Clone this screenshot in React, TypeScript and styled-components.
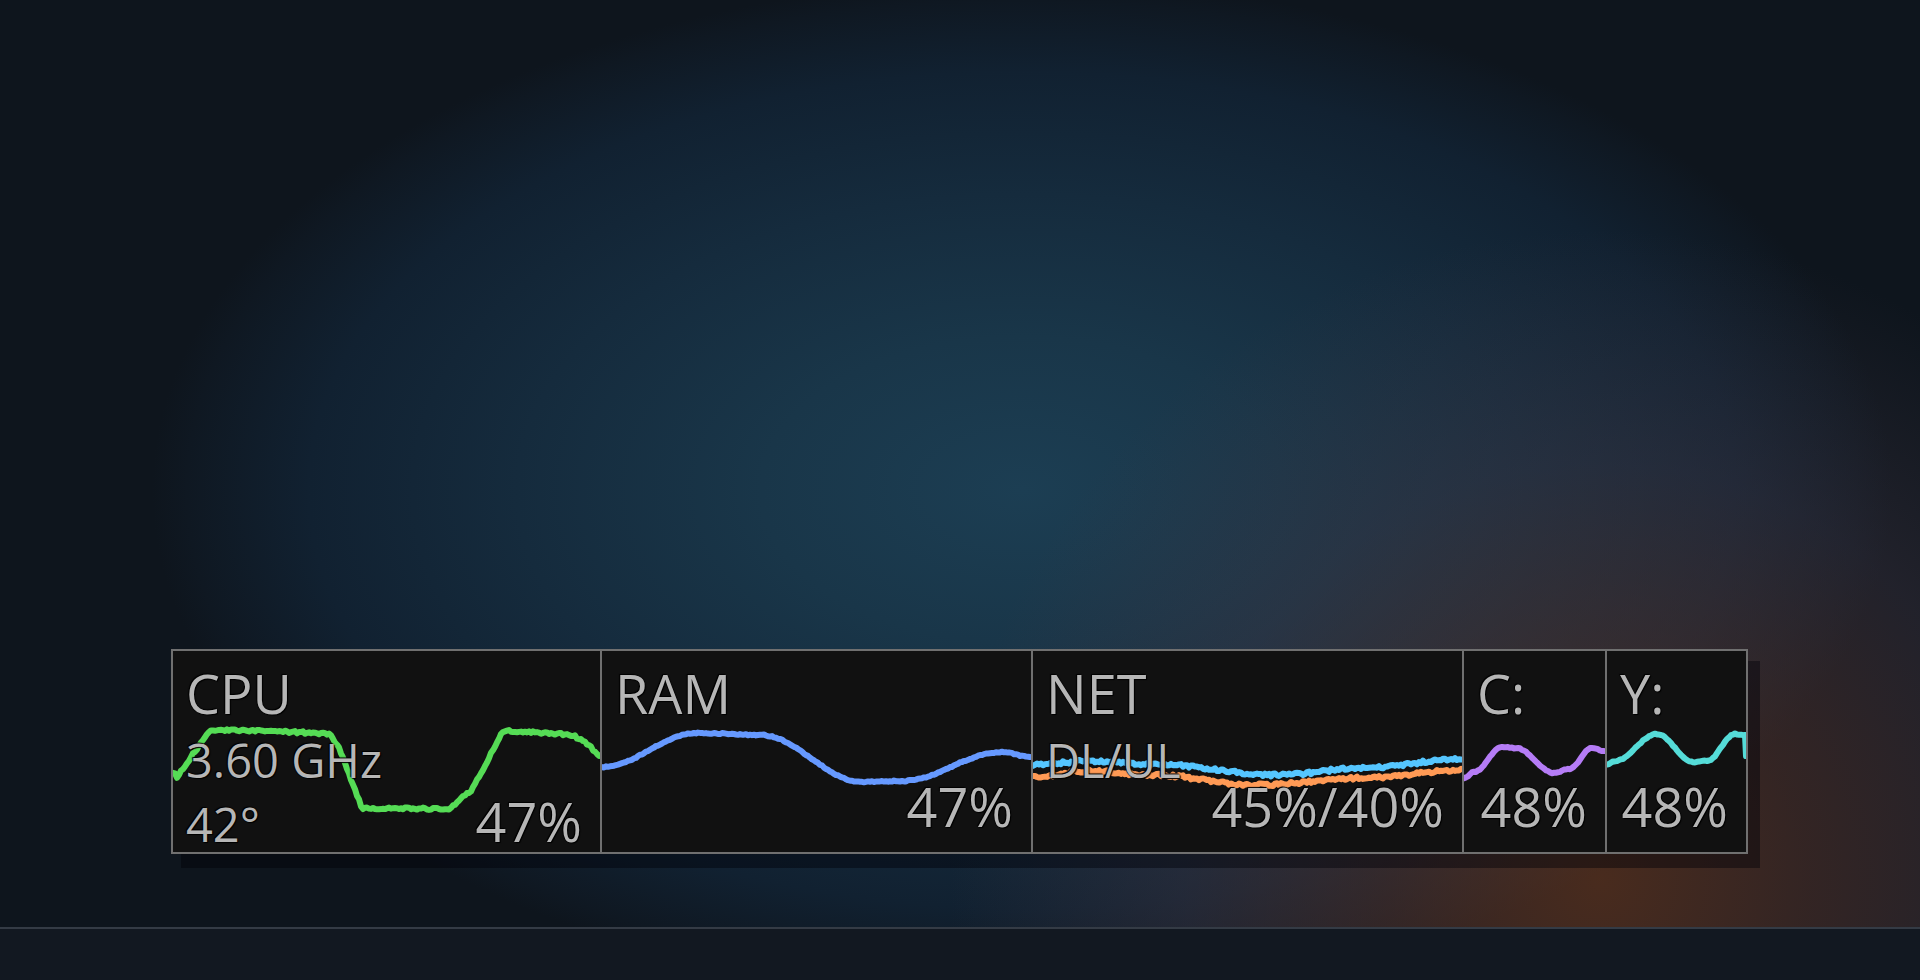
import React from 'react';
import styled, { createGlobalStyle } from 'styled-components';

const GlobalStyle = createGlobalStyle`
  html, body {
    margin: 0;
    padding: 0;
    height: 100%;
    overflow: hidden;
    background: #0e141b;
  }
  #root {
    height: 100%;
  }
`;

const Screen = styled.div`
  width: 1920px;
  height: 980px;
  display: flex;
  flex-direction: column;
  font-family: "Open Sans", "Noto Sans", sans-serif;
`;

const Desktop = styled.main`
  flex: 1;
  box-sizing: border-box;
  padding: 649px 0 0 171px;
  background:
    radial-gradient(circle 650px at 1600px 880px, rgba(112, 58, 30, 0.6) 0%, rgba(88, 52, 42, 0.5) 32%, rgba(68, 56, 68, 0.36) 64%, rgba(50, 60, 75, 0) 100%),
    radial-gradient(ellipse 870px 510px at 1022px 490px, #1c3e53 0%, #193649 30%, #152b3d 58%, #112131 82%, #0f1822 96%, #0e151d 100%),
    #0e141b;
`;

const Taskbar = styled.footer`
  height: 51px;
  border-top: 2px solid #343b45;
  background: #121821;
`;

const Monitor = styled.section`
  display: flex;
  width: max-content;
  border: 2px solid #707070;
  background: #111111;
  box-shadow: 11px 13px 0 1px rgba(0, 0, 6, 0.42);
`;

const Cell = styled.div<{ $w: number }>`
  position: relative;
  box-sizing: border-box;
  width: ${(p) => p.$w}px;
  height: 201px;
  padding: 15px 18px 19px 13px;
  display: grid;
  grid-template: 1fr / 1fr;
  & + & {
    border-left: 2px solid #707070;
  }
`;

// history plot, laid under the readings across the whole cell
const Graph = styled.svg`
  position: absolute;
  top: 0;
  left: 0;
  overflow: hidden;
`;

const Head = styled.div`
  grid-area: 1 / 1;
  position: relative;
  z-index: 1;
  display: flex;
  flex-direction: column;
  align-self: start;
  justify-self: start;
  gap: 16px;
`;

const Label = styled.span`
  font-size: 54px;
  line-height: 54px;
  color: #b6b6b6;
  white-space: nowrap;
  text-shadow: 0 0 1px #000, 1px 1px 1px #000, -1px -1px 1px #000;
`;

const SubLine = styled(Label)`
  font-size: 47px;
  line-height: 48px;
`;

const Value = styled(Label)`
  grid-area: 1 / 1;
  position: relative;
  z-index: 1;
  align-self: end;
  justify-self: end;
`;

type Pt = [number, number];

interface Series {
  color: string;
  keys: Pt[];
  jitter: number;
  seed: number;
  smooth?: boolean;
  tail?: Pt[];
}

interface Meter {
  label: string;
  lines?: string[];
  value: string;
  width: number;
  series: Series[];
}

const hash = (n: number) => {
  const s = Math.sin(n * 12.9898) * 43758.5453;
  return s - Math.floor(s);
};

// sample the key points every 2px, with a little noise on top
const trace = (s: Series, width: number) => {
  const pts: string[] = [];
  const { keys } = s;
  for (let x = 0; x <= width; x += 2) {
    let i = 0;
    while (i < keys.length - 2 && x > keys[i + 1][0]) i++;
    const [x0, y0] = keys[i];
    const [x1, y1] = keys[i + 1];
    let t = Math.min(1, Math.max(0, (x - x0) / (x1 - x0)));
    if (s.smooth) t = (1 - Math.cos(t * Math.PI)) / 2;
    const y = y0 + (y1 - y0) * t + (hash(x + s.seed * 131) - 0.5) * s.jitter;
    pts.push(`${x},${y.toFixed(1)}`);
  }
  (s.tail || []).forEach(([x, y]) => pts.push(`${x},${y}`));
  return pts.join(' ');
};

const meters: Meter[] = [
  {
    label: 'CPU',
    lines: ['3.60 GHz', '42°'],
    value: '47%',
    width: 427,
    series: [
      {
        color: '#55dc55',
        jitter: 2.4,
        seed: 1,
        keys: [
          [0, 121], [4, 126], [37, 79], [100, 80], [157, 83], [167, 99], [189, 157],
          [277, 158], [289, 146], [299, 139], [330, 80], [360, 81], [400, 84], [417, 95], [427, 106],
        ],
      },
    ],
  },
  {
    label: 'RAM',
    value: '47%',
    width: 431,
    series: [
      {
        color: '#6699ff',
        jitter: 1.2,
        seed: 2,
        smooth: true,
        keys: [[0, 116], [95, 82], [158, 84], [261, 131], [300, 130], [400, 101], [429, 106]],
      },
    ],
  },
  {
    label: 'NET',
    lines: ['DL/UL'],
    value: '45%/40%',
    width: 431,
    series: [
      {
        color: '#ff9a55',
        jitter: 3,
        seed: 3,
        smooth: true,
        keys: [[0, 126], [55, 120], [120, 124], [225, 134], [330, 127], [429, 119]],
      },
      {
        color: '#55c6ff',
        jitter: 3,
        seed: 4,
        smooth: true,
        keys: [[0, 114], [55, 110], [120, 113], [245, 124], [330, 117], [429, 108]],
      },
    ],
  },
  {
    label: 'C:',
    value: '48%',
    width: 143,
    series: [
      {
        color: '#b57cf6',
        jitter: 1,
        seed: 5,
        smooth: true,
        keys: [[0, 127], [10, 121], [38, 96], [52, 97], [90, 122], [105, 118], [128, 97], [141, 100]],
      },
    ],
  },
  {
    label: 'Y:',
    value: '48%',
    width: 141,
    series: [
      {
        color: '#55dcd8',
        jitter: 1,
        seed: 6,
        smooth: true,
        keys: [[0, 114], [8, 110], [50, 83], [86, 111], [100, 110], [128, 83], [139, 84]],
        tail: [[139, 105]],
      },
    ],
  },
];

const MeterCell: React.FC<{ meter: Meter; first: boolean }> = ({ meter, first }) => {
  const inner = meter.width - (first ? 0 : 2);
  return (
    <Cell $w={meter.width}>
      <Graph width={inner} height={201} viewBox={`0 0 ${inner} 201`}>
        {meter.series.map((s) => (
          <polyline
            key={s.seed}
            points={trace(s, inner)}
            fill="none"
            stroke={s.color}
            strokeWidth={6}
            strokeLinejoin="round"
            strokeLinecap="round"
          />
        ))}
      </Graph>
      <Head>
        <Label>{meter.label}</Label>
        {meter.lines?.map((line) => (
          <SubLine key={line}>{line}</SubLine>
        ))}
      </Head>
      <Value>{meter.value}</Value>
    </Cell>
  );
};

export default function App() {
  return (
    <>
      <GlobalStyle />
      <Screen>
        <Desktop>
          <Monitor>
            {meters.map((m, i) => (
              <MeterCell key={m.label} meter={m} first={i === 0} />
            ))}
          </Monitor>
        </Desktop>
        <Taskbar />
      </Screen>
    </>
  );
}
